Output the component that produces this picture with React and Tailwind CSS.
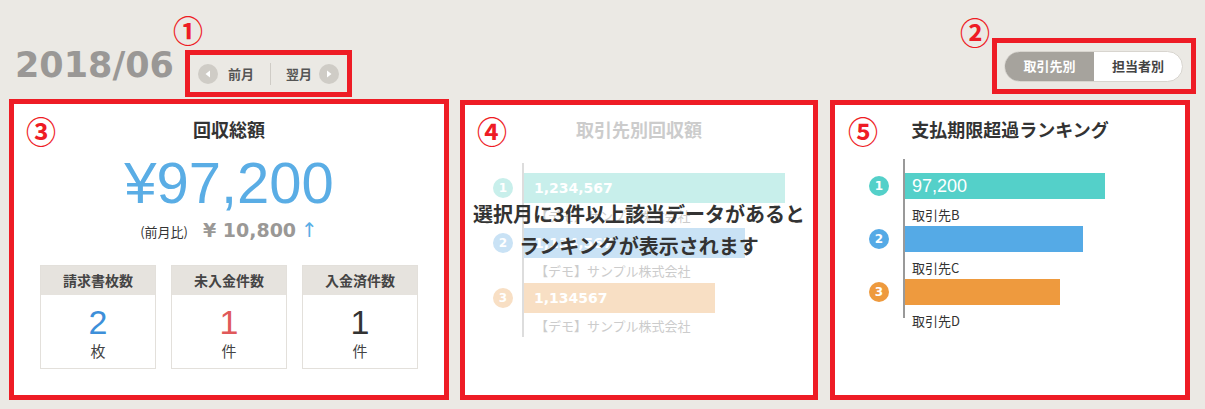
const jp = "font-['Noto_Sans_CJK_JP',sans-serif]";
const num = "font-['Liberation_Sans','Noto_Sans_CJK_JP',sans-serif]";
const dv = "font-['DejaVu_Sans','Noto_Sans_CJK_JP',sans-serif]";

const Mark = ({ children, className }) => (
  <span
    className={`absolute text-[30px] leading-none font-bold text-[#ee1c25] ${jp} ${className}`}
  >
    {children}
  </span>
);

const NavArrow = ({ dir }) => (
  <span className="w-[20px] h-[20px] rounded-full bg-[#cfccc6] flex items-center justify-center">
    <svg width="8" height="8" viewBox="0 0 8 8">
      {dir === "left" ? (
        <polygon points="6,0.5 6,7.5 1.5,4" fill="#fff" />
      ) : (
        <polygon points="2,0.5 2,7.5 6.5,4" fill="#fff" />
      )}
    </svg>
  </span>
);

const StatBox = ({ title, value, unit, color }) => (
  <div className="w-[116px] h-[104px] border border-[#e3e0db] flex flex-col">
    <div className="h-[29px] bg-[#e6e3de] flex items-center justify-center text-[14px] font-bold text-[#444]">
      {title}
    </div>
    <div className="flex flex-col items-center pt-[10px]">
      <span className={`text-[34px] leading-none ${num} ${color}`}>{value}</span>
      <span className="text-[15px] leading-none mt-[4px] text-[#444]">{unit}</span>
    </div>
  </div>
);

const fadedRows = [
  { n: 1, value: "1,234,567", w: "w-[261px]", bar: "bg-[#c8efeb]" },
  { n: 2, value: "1,134,567", w: "w-[221px]", bar: "bg-[#c9e2f5]" },
  { n: 3, value: "1,134567", w: "w-[191px]", bar: "bg-[#f8dfc4]" },
];

const rankRows = [
  { n: 1, value: "97,200", name: "取引先B", w: "w-[200px]", bar: "bg-[#54d0c9]" },
  { n: 2, value: "", name: "取引先C", w: "w-[178px]", bar: "bg-[#55aae6]" },
  { n: 3, value: "", name: "取引先D", w: "w-[155px]", bar: "bg-[#ee9a3e]" },
];

export default function App() {
  return (
    <div className={`w-[1205px] h-[409px] bg-[#ebe9e4] relative overflow-hidden ${jp}`}>
      <Mark className="left-[173px] top-[14px]">①</Mark>
      <Mark className="left-[960px] top-[16px]">②</Mark>

      {/* header */}
      <div className="h-[99px] flex items-start">
        <div className="w-[185px] shrink-0 pl-[15px] pt-[48px]">
          <span className={`text-[35px] leading-none font-bold text-[#9a9896] ${dv}`}>
            2018/06
          </span>
        </div>
        <div className="mt-[50px] w-[167px] h-[47px] border-[5px] border-[#ee1c25] flex items-center px-[8px]">
          <NavArrow dir="left" />
          <span className="ml-[10px] text-[13px] font-bold text-[#555]">前月</span>
          <span className="ml-[16px] mr-[15px] w-px h-[22px] bg-[#cfccc6]" />
          <span className="text-[13px] font-bold text-[#555]">翌月</span>
          <span className="ml-auto">
            <NavArrow dir="right" />
          </span>
        </div>
        <div className="ml-auto mr-[9px] mt-[38px] w-[204px] h-[56px] border-[5px] border-[#ee1c25] flex items-center pl-[7px]">
          <div className="w-[179px] h-[31px] rounded-full border border-[#d8d5cf] bg-white overflow-hidden flex text-[13px] font-bold">
            <div className="w-[89px] bg-[#a6a39d] text-white flex items-center justify-center">
              取引先別
            </div>
            <div className="flex-1 text-[#444] flex items-center justify-center">担当者別</div>
          </div>
        </div>
      </div>

      {/* cards */}
      <div className="flex items-start pl-[9px]">
        {/* card 3 */}
        <div className="relative w-[440px] h-[301px] bg-white border-[5px] border-[#ee1c25] flex flex-col items-center pt-[16px]">
          <Mark className="left-[12px] top-[11px]">③</Mark>
          <h2 className="text-[18px] leading-none font-bold text-[#333]">回収総額</h2>
          <p className={`mt-[16px] text-[58px] leading-none text-[#5aade5] ${num}`}>¥97,200</p>
          <div className="mt-[8px] flex items-baseline">
            <span className="text-[13px] text-[#333]">(前月比)</span>
            <span className={`ml-[15px] text-[19px] leading-none font-bold text-[#9a9896] ${dv}`}>
              ¥ 10,800
            </span>
            <span className={`ml-[5px] text-[20px] leading-none text-[#5aade5] ${dv}`}>↑</span>
          </div>
          <div className="mt-[23px] flex gap-[15px]">
            <StatBox title="請求書枚数" value="2" unit="枚" color="text-[#3d8fd9]" />
            <StatBox title="未入金件数" value="1" unit="件" color="text-[#e0595a]" />
            <StatBox title="入金済件数" value="1" unit="件" color="text-[#333]" />
          </div>
        </div>

        {/* card 4 */}
        <div className="relative ml-[11px] mt-[1px] w-[358px] h-[300px] bg-white border-[5px] border-[#ee1c25] flex flex-col pt-[15px]">
          <Mark className="left-[12px] top-[10px]">④</Mark>
          <h2 className="text-center text-[18px] leading-none font-bold text-[#cccccc]">
            取引先別回収額
          </h2>
          <div className="mt-[25px] pl-[28px] flex">
            <div className="w-[20px] mr-[9px] pt-[10px] flex flex-col">
              {fadedRows.map((r) => (
                <div key={r.n} className="h-[55px]">
                  <div className="h-[30px] flex items-center">
                    <span
                      className={`w-[20px] h-[20px] rounded-full ${r.bar} text-white text-[12px] font-bold flex items-center justify-center ${dv}`}
                    >
                      {r.n}
                    </span>
                  </div>
                </div>
              ))}
            </div>
            <div className="border-l-2 border-[#dddddd] h-[174px] pt-[10px] flex flex-col">
              {fadedRows.map((r) => (
                <div key={r.n} className="h-[55px]">
                  <div className={`h-[30px] ${r.w} ${r.bar} flex items-center pl-[10px]`}>
                    <span className={`text-[14px] font-bold text-white ${dv}`}>{r.value}</span>
                  </div>
                  <div className="h-[25px] flex items-center pl-[11px] text-[13px] text-[#cccccc]">
                    【デモ】サンプル株式会社
                  </div>
                </div>
              ))}
            </div>
          </div>
          <div className="absolute inset-x-0 top-[93px] text-center text-[20px] leading-[32px] font-bold text-[#333]">
            <p>選択月に3件以上該当データがあると</p>
            <p>ランキングが表示されます</p>
          </div>
        </div>

        {/* card 5 */}
        <div className="relative ml-[12px] mt-[1px] w-[360px] h-[300px] bg-white border-[5px] border-[#ee1c25] flex flex-col pt-[15px]">
          <Mark className="left-[13px] top-[10px]">⑤</Mark>
          <h2 className="text-center text-[18px] leading-none font-bold text-[#333]">
            支払期限超過ランキング
          </h2>
          <div className="mt-[21px] pl-[34px] flex">
            <div className="w-[20px] mr-[14px] pt-[14px] flex flex-col">
              {rankRows.map((r) => (
                <div key={r.n} className="h-[53px]">
                  <div className="h-[26px] flex items-center">
                    <span
                      className={`w-[20px] h-[20px] rounded-full ${r.bar} text-white text-[12px] font-bold flex items-center justify-center ${dv}`}
                    >
                      {r.n}
                    </span>
                  </div>
                </div>
              ))}
            </div>
            <div className="border-l-2 border-[#999] h-[159px] pt-[14px] flex flex-col">
              {rankRows.map((r) => (
                <div key={r.n} className="h-[53px] shrink-0">
                  <div className={`h-[26px] ${r.w} ${r.bar} flex items-center pl-[7px]`}>
                    <span className={`text-[18px] leading-none text-white ${num}`}>{r.value}</span>
                  </div>
                  <div className="h-[27px] pt-[9px] pl-[7px] text-[13px] leading-none text-[#333]">
                    {r.name}
                  </div>
                </div>
              ))}
            </div>
          </div>
        </div>
      </div>
    </div>
  );
}
